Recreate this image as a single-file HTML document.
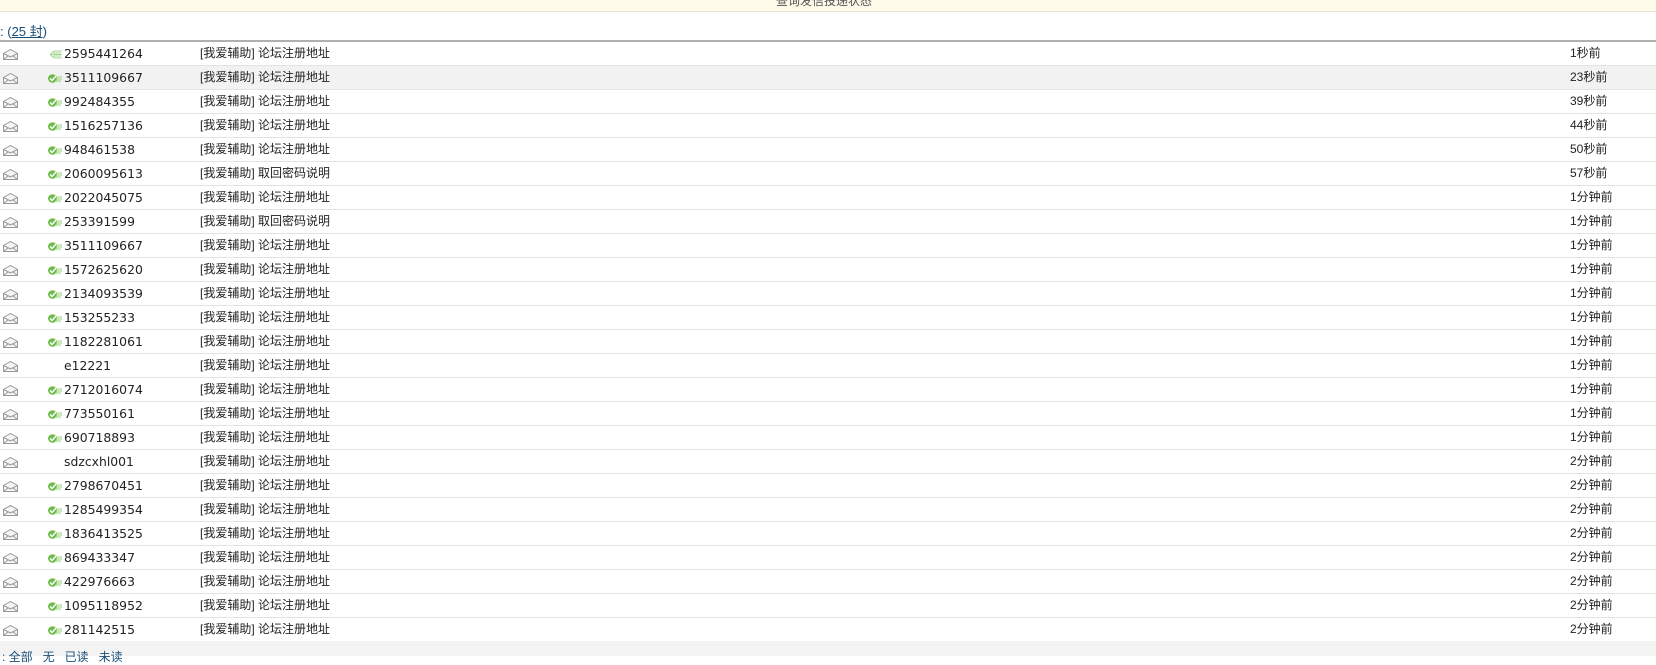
<!DOCTYPE html>
<html><head><meta charset="utf-8"><style>
body{margin:0;width:1656px;height:656px;overflow:hidden;background:#fff;font-family:"Liberation Sans","Noto Sans CJK SC",sans-serif;font-size:12px;color:#222;position:relative}
.top{position:absolute;left:0;top:0;width:1656px;height:11px;background:#fffbea;border-bottom:1px solid #e8e4cf;overflow:hidden}
.top span{position:absolute;left:776px;top:-8px;color:#555;font-size:12px}
.cnt{position:absolute;left:0;top:21px;font-size:13px;color:#1a4e78}
.cnt u{text-decoration:underline}
.hb{position:absolute;left:0;top:40px;width:1656px;height:2px;background:#b0b0b0}
.r{position:absolute;left:0;width:1656px;height:23px;border-bottom:1px solid #e3e3e3;line-height:23px}
.r .c{position:absolute;top:0;white-space:nowrap;line-height:23px}
.num{font-family:"DejaVu Sans",sans-serif;font-size:12.4px;color:#222}
.env{position:absolute;left:3px;top:7px}
.chk{position:absolute;left:48px;top:8px}
.foot{position:absolute;left:0;top:641px;width:1656px;height:15px;background:#f3f3f3}
.foot span{position:absolute;left:2px;top:7px;color:#1a4e78}
.wm{position:absolute;left:1620px;top:612px;color:#fff;font-size:15px;font-weight:bold;opacity:.85}
</style></head><body>
<div class="top"><span>查询发信投递状态</span></div>
<div class="cnt">: (<u>25 封</u>)</div>
<div class="hb"></div>
<div id="rows"></div>
<div class="foot"><span>: 全部 &nbsp; 无 &nbsp; 已读 &nbsp; 未读</span></div>
<script>
var d=[["2595441264","论坛注册地址","1秒前",2],["3511109667","论坛注册地址","23秒前",1],["992484355","论坛注册地址","39秒前",1],["1516257136","论坛注册地址","44秒前",1],["948461538","论坛注册地址","50秒前",1],["2060095613","取回密码说明","57秒前",1],["2022045075","论坛注册地址","1分钟前",1],["253391599","取回密码说明","1分钟前",1],["3511109667","论坛注册地址","1分钟前",1],["1572625620","论坛注册地址","1分钟前",1],["2134093539","论坛注册地址","1分钟前",1],["153255233","论坛注册地址","1分钟前",1],["1182281061","论坛注册地址","1分钟前",1],["e12221","论坛注册地址","1分钟前",0],["2712016074","论坛注册地址","1分钟前",1],["773550161","论坛注册地址","1分钟前",1],["690718893","论坛注册地址","1分钟前",1],["sdzcxhl001","论坛注册地址","2分钟前",0],["2798670451","论坛注册地址","2分钟前",1],["1285499354","论坛注册地址","2分钟前",1],["1836413525","论坛注册地址","2分钟前",1],["869433347","论坛注册地址","2分钟前",1],["422976663","论坛注册地址","2分钟前",1],["1095118952","论坛注册地址","2分钟前",1],["281142515","论坛注册地址","2分钟前",1]];
var env='<svg class="env" width="15" height="11" viewBox="0 0 15 11"><path d="M0.5 4.5L7.5 0.5L14.5 4.5V10.5H0.5Z" fill="#f6f6f6" stroke="#999"/><path d="M0.5 4.5L7.5 8L14.5 4.5M0.5 10.5L5.5 6.5M14.5 10.5L9.5 6.5" fill="none" stroke="#999"/></svg>';
var h='';
for(var i=0;i<d.length;i++){var t=42+i*24;var x=d[i];
var c='';
if(x[3]==1)c='<svg class="chk" width="14" height="9" viewBox="0 0 14 9"><ellipse cx="4.5" cy="4.5" rx="4.5" ry="4.3" fill="#6cbc48"/><path d="M2 4.5L4 6.5L8 2" stroke="#fff" stroke-width="1.4" fill="none"/><path d="M8 3H14M8 5H14M7 7H13" stroke="#9ad07f" stroke-width="1"/></svg>';
if(x[3]==2)c='<svg class="chk" width="14" height="9" viewBox="0 0 14 9"><path d="M2 4.5L6 1H14M2 4.5H14M2 4.5L6 8H14M5 3H13M5 6H13" stroke="#a5d690" stroke-width="1" fill="none"/></svg>';
h+='<div class="r" style="top:'+t+'px;'+(i==1?'background:#f2f2f2;':'')+'">'+env+c+'<span class="c num" style="left:64px">'+x[0]+'</span><span class="c" style="left:200px">[我爱辅助] '+x[1]+'</span><span class="c" style="left:1570px">'+x[2]+'</span></div>';}
document.getElementById('rows').innerHTML=h;
</script>
</body></html>
